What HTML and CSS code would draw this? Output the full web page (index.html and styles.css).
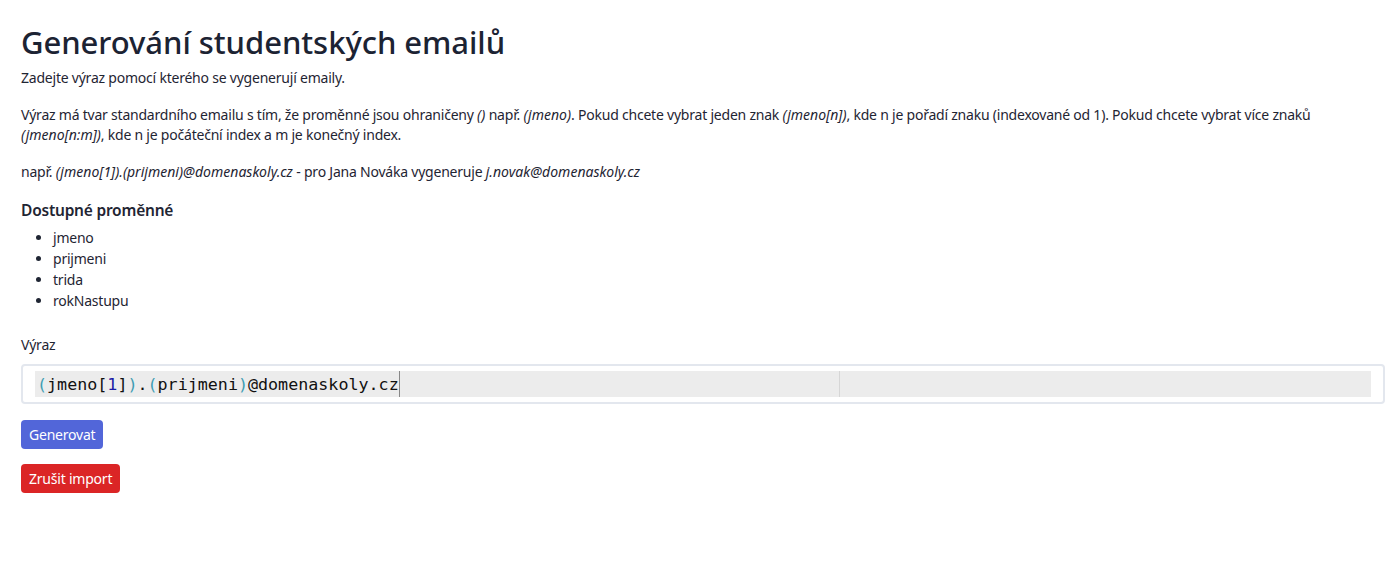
FILE: index.html
```html
<!DOCTYPE html>
<html lang="cs">
<head>
<meta charset="utf-8">
<title>Generování studentských emailů</title>
<link rel="stylesheet" href="styles.css">
</head>
<body>
<main class="page">
  <h1 class="title">Generování studentských emailů</h1>
  <p class="text">Zadejte výraz pomocí kterého se vygenerují emaily.</p>
  <p class="text">Výraz má tvar standardního emailu s tím, že proměnné jsou ohraničeny <i>()</i> např. <i>(jmeno)</i>. Pokud chcete vybrat jeden znak <i>(jmeno[n])</i>, kde n je pořadí znaku (indexované od 1). Pokud chcete vybrat více znaků <i>(jmeno[n:m])</i>, kde n je počáteční index a m je konečný index.</p>
  <p class="text">např. <i>(jmeno[1]).(prijmeni)@domenaskoly.cz</i> - pro Jana Nováka vygeneruje <i>j.novak@domenaskoly.cz</i></p>
  <h2 class="subtitle">Dostupné proměnné</h2>
  <ul class="vars">
    <li>jmeno</li>
    <li>prijmeni</li>
    <li>trida</li>
    <li>rokNastupu</li>
  </ul>
  <label class="label">Výraz</label>
  <div class="editor-box">
    <div class="editor">
      <span class="line"><span class="paren">(</span>jmeno[<span class="num">1</span>]<span class="paren">)</span>.<span class="paren">(</span>prijmeni<span class="paren">)</span>@domenaskoly.cz</span><span class="cursor"></span>
      <span class="margin"></span>
    </div>
  </div>
  <div class="actions">
    <button class="btn btn-primary">Generovat</button>
    <button class="btn btn-danger">Zrušit import</button>
  </div>
</main>
</body>
</html>
```
FILE: styles.css
```css
* { box-sizing: border-box; }
body {
  margin: 0;
  font-family: "Noto Sans", "Open Sans", sans-serif;
  color: #1f2533;
  background: #fff;
  letter-spacing: -0.22px;
}
i { letter-spacing: 0.02px; }
.page {
  padding: 22px 9px 0 21px;
}
.title {
  margin: 0;
  font-size: 31px;
  font-weight: 500;
  line-height: 40px;
  color: #1c2333;
  letter-spacing: -0.05px;
}
.text {
  margin: 6px 0 17px;
  font-size: 14px;
  line-height: 20px;
}
.text + .text { margin-top: 0; }
.subtitle {
  margin: 0;
  font-size: 15.5px;
  font-weight: 600;
  line-height: 22px;
}
.vars {
  margin: 6px 0 0;
  padding-left: 32px;
  font-size: 14px;
  line-height: 21px;
}
.label {
  display: block;
  margin-top: 24px;
  font-size: 14px;
  line-height: 20px;
}
.editor-box {
  margin-top: 9px;
  border: 2px solid #e3e7ee;
  border-radius: 4px;
  padding: 5px 12px 5px 12px;
  height: 40px;
}
.editor {
  position: relative;
  height: 26px;
  background: #ececec;
  font-family: "DejaVu Sans Mono", monospace;
  font-size: 16.7px;
  letter-spacing: 0;
  line-height: 26px;
  color: #111;
  padding-left: 2px;
  display: flex;
  align-items: center;
}
.paren { color: #3f9db3; }
.num { color: #1a1aa6; }
.cursor {
  display: inline-block;
  width: 1px;
  height: 26px;
  background: #888;
}
.margin {
  position: absolute;
  left: 804px;
  top: 0;
  width: 1px;
  height: 100%;
  background: #d6d6d6;
}
.actions {
  margin-top: 16px;
  display: flex;
  flex-direction: column;
  align-items: flex-start;
  gap: 15px;
}
.btn {
  font-family: inherit;
  font-size: 14px;
  letter-spacing: -0.22px;
  line-height: 20px;
  color: #fff;
  border: 0;
  border-radius: 4px;
  padding: 4px 8px;
  height: 29px;
}
.btn-primary { background: #5266d9; }
.btn-danger { background: #db2526; }
```
